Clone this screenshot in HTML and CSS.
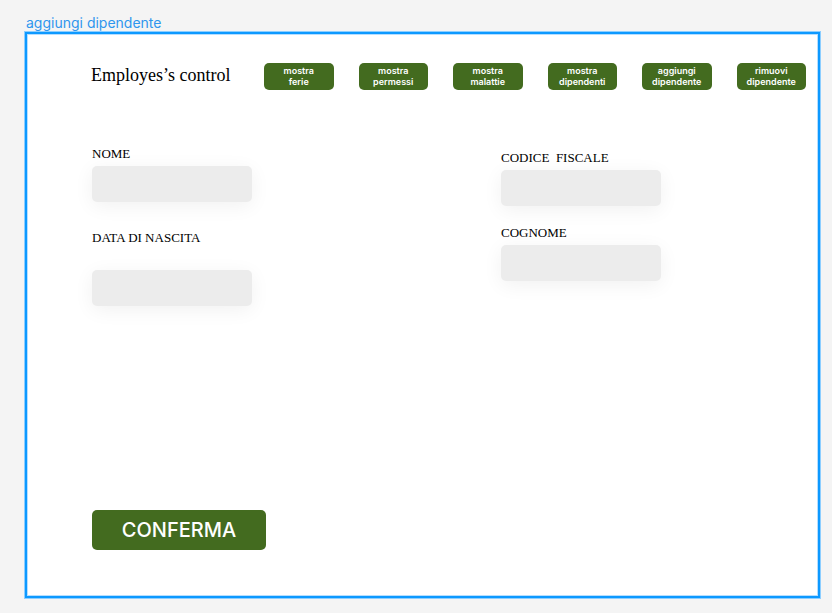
FILE: index.html
```html
<!DOCTYPE html>
<html lang="it">
<head>
<meta charset="utf-8">
<meta name="viewport" content="width=device-width, initial-scale=1">
<title>aggiungi dipendente</title>
<link rel="stylesheet" href="styles.css">
</head>
<body>
<div class="frame-title">aggiungi dipendente</div>
<main class="frame">
  <header class="header">
    <h1 class="brand">Employes’s control</h1>
    <nav class="nav">
      <button type="button" class="button">mostra<br>ferie</button>
      <button type="button" class="button">mostra<br>permessi</button>
      <button type="button" class="button">mostra<br>malattie</button>
      <button type="button" class="button">mostra<br>dipendenti</button>
      <button type="button" class="button">aggiungi<br>dipendente</button>
      <button type="button" class="button">rimuovi<br>dipendente</button>
    </nav>
  </header>
  <form class="form">
    <div class="columns">
      <div class="column">
        <div class="field">
          <label for="nome">NOME</label>
          <input id="nome" type="text">
        </div>
        <div class="field field-spaced">
          <label for="nascita">DATA DI NASCITA</label>
          <input id="nascita" type="text">
        </div>
      </div>
      <div class="column column-end">
        <div class="field">
          <label for="codice">CODICE&nbsp; FISCALE</label>
          <input id="codice" type="text">
        </div>
        <div class="field">
          <label for="cognome">COGNOME</label>
          <input id="cognome" type="text">
        </div>
      </div>
    </div>
    <button type="button" class="button button-large">CONFERMA</button>
  </form>
</main>
</body>
</html>
```
FILE: styles.css
```css
* {
  box-sizing: border-box;
}

body {
  margin: 0;
  min-height: 100vh;
  padding: 14px 12px 15px 25px;
  display: flex;
  flex-direction: column;
  background: #f4f4f4;
  font-family: Inter, sans-serif;
}

.frame-title {
  padding-left: 1px;
  font-size: 14px;
  line-height: 18px;
  color: #2f96ee;
}

.frame {
  flex: 1;
  display: flex;
  flex-direction: column;
  border: 2px solid #0d99ff;
  box-shadow: 0 0 0 1px #8dceff, inset 0 0 0 1px #b5deff;
  background: #fff;
}

.header {
  display: flex;
  align-items: flex-start;
  padding: 29px 12px 0 64px;
}

.brand {
  flex: none;
  width: 173px;
  margin: 0;
  font: 400 18px/24px "Liberation Serif", serif;
  color: #000;
}

.nav {
  flex: 1;
  display: grid;
  grid-template-columns: repeat(6, 1fr);
  gap: 25px;
}

.button {
  border: 0;
  border-radius: 5px;
  padding: 2px 0 3px;
  background: #436b1f;
  color: #fff;
  font: 600 9px/11px Inter, sans-serif;
  text-align: center;
}

.form {
  flex: 1;
  display: flex;
  flex-direction: column;
  justify-content: space-between;
  align-items: flex-start;
  padding: 56px 64px 46px 65px;
}

.columns {
  align-self: stretch;
  display: grid;
  grid-template-columns: 409px 1fr;
}

.column {
  display: flex;
  flex-direction: column;
  gap: 28px;
}

.column-end {
  padding-top: 4px;
  gap: 19px;
}

.field {
  display: flex;
  flex-direction: column;
  align-items: flex-start;
  gap: 4px;
}

.field-spaced {
  gap: 24px;
}

.field label {
  font: 400 13px/16px "Liberation Serif", serif;
  color: #000;
}

.field input {
  width: 160px;
  height: 36px;
  border: 0;
  border-radius: 5px;
  padding: 0 10px;
  background: #ececec;
  box-shadow: 0 4px 20px rgba(0, 0, 0, 0.06);
  font: 400 13px/16px Inter, sans-serif;
}

.button-large {
  width: 174px;
  padding: 8px 0;
  font-weight: 500;
  font-size: 20px;
  line-height: 24px;
}
```
